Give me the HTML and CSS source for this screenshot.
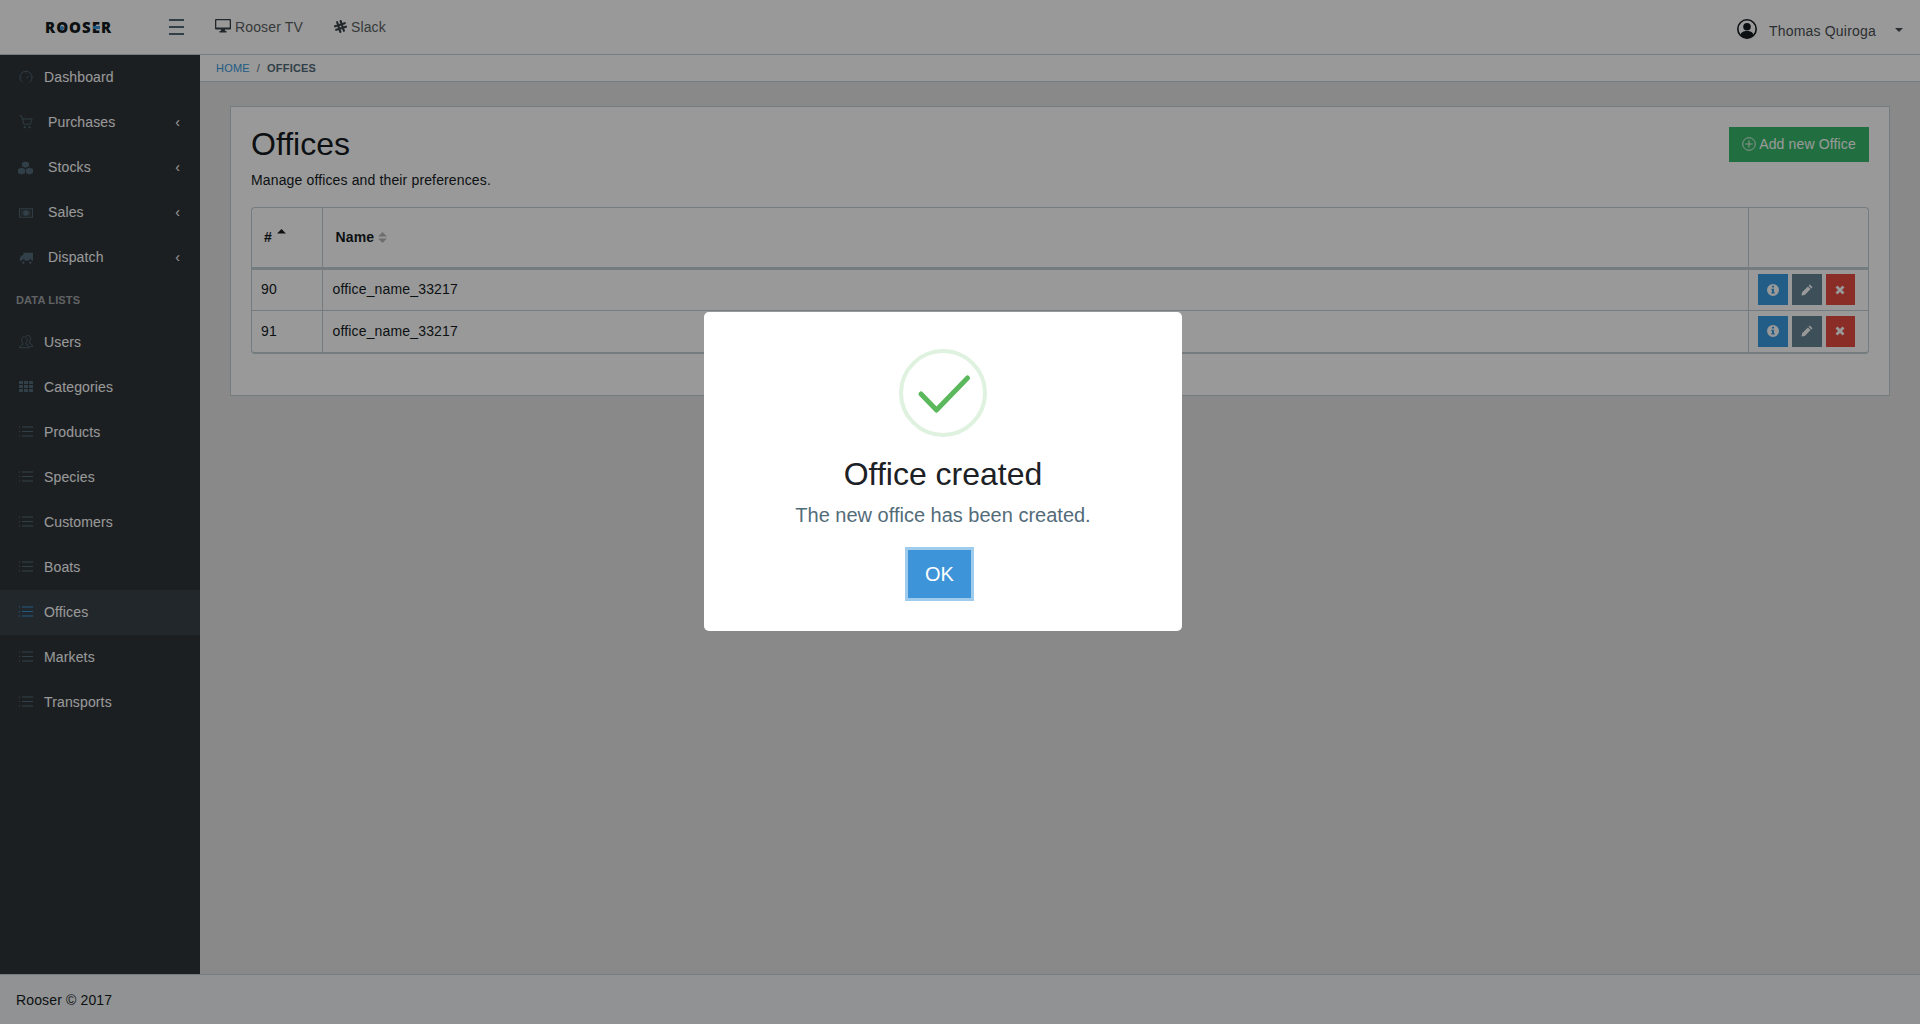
FILE: index.html
```html
<!DOCTYPE html>
<html lang="en">
<head>
    <meta charset="UTF-8">
    <meta name="viewport" content="width=device-width, initial-scale=1.0">
    <title>Rooser - Offices</title>
    <link rel="stylesheet" href="styles.css">
</head>
<body>
    <svg class="sprite" xmlns="http://www.w3.org/2000/svg">
        <symbol id="i-speed" viewBox="0 0 16 16"><path d="M4 14.200A7 7 0 1 1 12 14.200M8 3v1M3 8H2M14 8h-1M8.200 9.200l3-2.400" fill="none" stroke="currentColor" stroke-width="1"/></symbol>
        <symbol id="i-basket" viewBox="0 0 16 16"><path d="M.5 1h2.500l2.500 9.500h7.500M3.800 4.500h11.200l-2 6" fill="none" stroke="currentColor" stroke-width="1"/><circle cx="6.500" cy="14" r="1.200" fill="currentColor"/><circle cx="12" cy="14" r="1.200" fill="currentColor"/></symbol>
        <symbol id="i-cubes" viewBox="0 0 18 16"><path d="M9 .5l4 1.600v4L9 7.700l-4-1.600v-4zM4.500 7.600l4 1.600v4.400l-4 1.900-4-1.900V9.200zM13.500 7.600l4 1.600v4.400l-4 1.900-4-1.900V9.200z" fill="currentColor"/></symbol>
        <symbol id="i-money" viewBox="0 0 15 10"><rect x=".5" y=".5" width="14" height="9" fill="none" stroke="currentColor"/><path d="M2 2h11v6H2z" fill="currentColor" opacity=".35"/><ellipse cx="7.500" cy="5" rx="3" ry="3" fill="currentColor"/></symbol>
        <symbol id="i-truck" viewBox="0 0 16 12"><path d="M5 0h11v9h-1.200a2 2 0 0 0-3.900 0H7a2 2 0 0 0-3.900 0H1V5.500L4 2.500h1zM5 10a1.300 1.300 0 1 0 .01 0zM13 10a1.300 1.300 0 1 0 .01 0z" fill="currentColor"/></symbol>
        <symbol id="i-people" viewBox="0 0 16 16"><path d="M.5 14.500c0-2.500 2.500-3 4-3.800v-1.400C3.400 8.500 3 7 3 5.500 3 3.500 4.300 2 6.200 2s3.200 1.500 3.200 3.500c0 1.500-.5 3-1.500 3.800v1.400c1.500.8 4 1.300 4 3.800zM8 1.200C8.700.7 9.300.5 10 .5c1.900 0 3.200 1.500 3.200 3.500 0 1.500-.5 3-1.500 3.800v1.400c1.500.8 3.800 1.300 3.800 3.800h-2.500" fill="none" stroke="currentColor" stroke-width="1"/></symbol>
        <symbol id="i-grid" viewBox="0 0 14 11"><path d="M0 0h4v3H0zM5 0h4v3H5zM10 0h4v3h-4zM0 4h4v3H0zM5 4h4v3H5zM10 4h4v3h-4zM0 8h4v3H0zM5 8h4v3H5zM10 8h4v3h-4z" fill="currentColor"/></symbol>
        <symbol id="i-list" viewBox="0 0 14 10"><path d="M0 0h1v1H0zM0 4.500h1v1H0zM0 9h1v1H0zM3 0h11v1H3zM3 4.500h11v1H3zM3 9h11v1H3z" fill="currentColor"/></symbol>
        <symbol id="i-desktop" viewBox="0 0 16 14"><path fill-rule="evenodd" d="M1 0h14a1 1 0 0 1 1 1v8.500a1 1 0 0 1-1 1H9.800l.4 1.500h1.300v1.500h-7V12h1.300l.4-1.500H1a1 1 0 0 1-1-1V1a1 1 0 0 1 1-1zM1.300 1.300v7.200h13.400V1.300z" fill="currentColor"/></symbol>
        <symbol id="i-slack" viewBox="0 0 14 14"><g transform="rotate(-18 7 7)" stroke="currentColor" stroke-width="2.300" stroke-linecap="round" fill="none"><path d="M5 1.500v11M9 1.500v11M1.500 5h11M1.500 9h11"/></g></symbol>
        <symbol id="i-user" viewBox="0 0 20 20"><circle cx="10" cy="10" r="9.200" fill="none" stroke="currentColor" stroke-width="1.600"/><circle cx="10" cy="7.800" r="3.800" fill="currentColor"/><path d="M3.500 16.500c.5-3.500 3-4.500 6.500-4.500s6 1 6.500 4.500A9 9 0 0 1 10 19.200a9 9 0 0 1-6.500-2.700z" fill="currentColor"/></symbol>
        <symbol id="i-plus" viewBox="0 0 14 14"><circle cx="7" cy="7" r="6.300" fill="none" stroke="currentColor" stroke-width=".9"/><path d="M7 3.300v7.400M3.300 7h7.400" stroke="currentColor" stroke-width=".9"/></symbol>
        <symbol id="i-info" viewBox="0 0 12 12"><path fill-rule="evenodd" d="M6 0a6 6 0 1 1 0 12A6 6 0 0 1 6 0zM5 1.800v1.700h2V1.800zM4.300 4.800v1.100H5v2.400h-.7v1.100h3.400V8.300H7V4.800z" fill="currentColor"/></symbol>
        <symbol id="i-pencil" viewBox="0 0 12 12"><path d="M8.800.5l2.700 2.700-1.200 1.200-2.700-2.700zM6.900 2.400l2.700 2.700-5.800 5.800L.5 11.500l.6-3.300z" fill="currentColor"/></symbol>
        <symbol id="i-times" viewBox="0 0 10 10"><path d="M1.500 1.500l7 7M8.500 1.500l-7 7" stroke="currentColor" stroke-width="2.800" fill="none"/></symbol>
    </svg>

    <header class="topbar">
        <div class="logo">R<span class="logo-o">O</span>OS<span class="logo-e">E</span>R</div>
        <div class="burger"><span></span><span></span><span></span></div>
        <a class="top-link top-tv"><svg class="ic-tv"><use href="#i-desktop"/></svg>Rooser TV</a>
        <a class="top-link top-slack"><svg class="ic-slack"><use href="#i-slack"/></svg>Slack</a>
        <div class="user">
            <svg class="ic-user"><use href="#i-user"/></svg>
            <span class="user-name">Thomas Quiroga</span>
            <span class="caret"></span>
        </div>
    </header>

    <div class="app-body">
        <nav class="sidebar">
            <a class="nav-item"><svg class="nav-ic"><use href="#i-speed"/></svg><span class="nav-label">Dashboard</span></a>
            <a class="nav-item has-sub"><svg class="nav-ic"><use href="#i-basket"/></svg><span class="nav-label">Purchases</span><span class="nav-arrow">‹</span></a>
            <a class="nav-item has-sub"><svg class="nav-ic wide"><use href="#i-cubes"/></svg><span class="nav-label">Stocks</span><span class="nav-arrow">‹</span></a>
            <a class="nav-item has-sub"><svg class="nav-ic low"><use href="#i-money"/></svg><span class="nav-label">Sales</span><span class="nav-arrow">‹</span></a>
            <a class="nav-item has-sub"><svg class="nav-ic low"><use href="#i-truck"/></svg><span class="nav-label">Dispatch</span><span class="nav-arrow">‹</span></a>
            <div class="nav-title">Data lists</div>
            <a class="nav-item"><svg class="nav-ic"><use href="#i-people"/></svg><span class="nav-label">Users</span></a>
            <a class="nav-item"><svg class="nav-ic list"><use href="#i-grid"/></svg><span class="nav-label">Categories</span></a>
            <a class="nav-item"><svg class="nav-ic list"><use href="#i-list"/></svg><span class="nav-label">Products</span></a>
            <a class="nav-item"><svg class="nav-ic list"><use href="#i-list"/></svg><span class="nav-label">Species</span></a>
            <a class="nav-item"><svg class="nav-ic list"><use href="#i-list"/></svg><span class="nav-label">Customers</span></a>
            <a class="nav-item"><svg class="nav-ic list"><use href="#i-list"/></svg><span class="nav-label">Boats</span></a>
            <a class="nav-item active"><svg class="nav-ic list"><use href="#i-list"/></svg><span class="nav-label">Offices</span></a>
            <a class="nav-item"><svg class="nav-ic list"><use href="#i-list"/></svg><span class="nav-label">Markets</span></a>
            <a class="nav-item"><svg class="nav-ic list"><use href="#i-list"/></svg><span class="nav-label">Transports</span></a>
        </nav>

        <main class="main">
            <div class="breadcrumb"><a>Home</a><span class="sep">/</span><b>Offices</b></div>
            <div class="page">
                <section class="card">
                    <div class="card-head">
                        <div>
                            <h1>Offices</h1>
                            <p>Manage offices and their preferences.</p>
                        </div>
                        <button class="btn-add"><svg class="ic-plus"><use href="#i-plus"/></svg>Add new Office</button>
                    </div>
                    <div class="table-wrap">
                        <table>
                            <thead>
                                <tr>
                                    <th class="col-id"># <svg class="sort" viewBox="0 0 8 10"><path d="M0 4L4 0l4 4z" fill="#151b1e"/></svg></th>
                                    <th class="col-name">Name <svg class="sort" viewBox="0 0 8 10"><path d="M0 4L4 0l4 4zM0 6l4 4 4-4z" fill="#b8b8b8"/></svg></th>
                                    <th class="col-act"></th>
                                </tr>
                            </thead>
                            <tbody>
                                <tr>
                                    <td>90</td>
                                    <td class="cell-name">office_name_33217</td>
                                    <td class="actions">
                                        <span class="act act-info"><svg><use href="#i-info"/></svg></span>
                                        <span class="act act-edit"><svg><use href="#i-pencil"/></svg></span>
                                        <span class="act act-del"><svg><use href="#i-times"/></svg></span>
                                    </td>
                                </tr>
                                <tr>
                                    <td>91</td>
                                    <td class="cell-name">office_name_33217</td>
                                    <td class="actions">
                                        <span class="act act-info"><svg><use href="#i-info"/></svg></span>
                                        <span class="act act-edit"><svg><use href="#i-pencil"/></svg></span>
                                        <span class="act act-del"><svg><use href="#i-times"/></svg></span>
                                    </td>
                                </tr>
                            </tbody>
                        </table>
                    </div>
                </section>
            </div>
        </main>
    </div>

    <footer class="footer">Rooser © 2017</footer>

    <div class="overlay">
        <div class="modal">
            <svg class="modal-check" viewBox="0 0 88 88">
                <circle cx="44" cy="44" r="42" fill="none" stroke="#dff1df" stroke-width="4"/>
                <path d="M22 45l15.500 16L68.500 29" fill="none" stroke="#5cb85c" stroke-width="5" stroke-linecap="round" stroke-linejoin="round"/>
            </svg>
            <h2>Office created</h2>
            <p>The new office has been created.</p>
            <button class="modal-ok">OK</button>
        </div>
    </div>
</body>
</html>
```

FILE: styles.css
```css
* {
    box-sizing: border-box;
}
body {
    margin: 0;
    height: 100vh;
    overflow: hidden;
    display: flex;
    flex-direction: column;
    font-family: "Liberation Sans", Arial, sans-serif;
    font-size: 14px;
    line-height: 21px;
    letter-spacing: 0.14px;
    color: #151b1e;
    background-color: #e4e5e6;
}
.sprite {
    display: none;
}

/* top bar */
.topbar {
    height: 55px;
    flex: none;
    display: flex;
    align-items: center;
    background-color: #fff;
    border-bottom: 1px solid #c2cfd6;
}
.logo {
    width: 169px;
    padding-left: 45px;
    font-family: "Open Sans", sans-serif;
    font-size: 15px;
    font-weight: 800;
    letter-spacing: 1px;
    color: #151b1e;
    flex: none;
}
.logo-o, .logo-e {
    position: relative;
}
.logo-o::after {
    content: "";
    position: absolute;
    left: 4px;
    top: 9px;
    width: 4px;
    height: 4px;
    border-radius: 50%;
    background-color: #3498db;
}
.logo-e::after {
    content: "";
    position: absolute;
    left: 1px;
    top: 9px;
    width: 7px;
    height: 3px;
    background-color: #3498db;
}
.burger {
    width: 15px;
    flex: none;
    display: flex;
    flex-direction: column;
    gap: 5px;
}
.burger span {
    height: 2px;
    background-color: #536c79;
}
.top-link {
    display: flex;
    align-items: center;
    color: #5a5f63;
}
.top-tv {
    margin-left: 31px;
}
.top-slack {
    margin-left: 31px;
}
.ic-tv {
    width: 16px;
    height: 14px;
    margin-right: 4px;
    margin-top: -2px;
    color: #3a4248;
}
.ic-slack {
    width: 13px;
    height: 13px;
    margin-right: 4px;
    margin-top: -2px;
    color: #3a4248;
}
.user {
    margin-left: auto;
    display: flex;
    align-items: center;
    padding-right: 17px;
}
.ic-user {
    width: 20px;
    height: 20px;
    margin-top: 4px;
    color: #151b1e;
}
.user-name {
    margin-left: 12px;
    margin-top: 8px;
    letter-spacing: 0.2px;
    color: #4a4f53;
}
.caret {
    margin-left: 19px;
    margin-top: 6px;
    border-left: 4px solid transparent;
    border-right: 4px solid transparent;
    border-top: 4px solid #4a4f53;
}

/* layout */
.app-body {
    flex: 1;
    display: flex;
    min-height: 0;
}

/* sidebar */
.sidebar {
    width: 200px;
    flex: none;
    background-color: #2f353a;
}
.nav-item {
    height: 45px;
    padding-left: 19px;
    padding-right: 20px;
    display: flex;
    align-items: center;
    color: #fff;
}
.nav-item.active {
    background-color: #3a4248;
}
.nav-item.active .nav-ic {
    color: #3498db;
}
.nav-ic {
    width: 14px;
    height: 14px;
    margin-top: -2px;
    margin-right: 11px;
    color: #536c79;
    flex: none;
}
.nav-ic.wide {
    width: 17px;
    margin-left: -2px;
    margin-top: 0;
    margin-right: 10px;
}
.nav-ic.low {
    margin-top: 0;
}
.nav-ic.list {
    height: 11px;
    margin-top: -3px;
}
.has-sub .nav-label {
    margin-left: 4px;
}
.nav-arrow {
    margin-left: auto;
    font-size: 14px;
    line-height: 14px;
    margin-top: -2px;
}
.nav-title {
    height: 40px;
    padding-left: 16px;
    padding-top: 10px;
    font-size: 11px;
    font-weight: 700;
    text-transform: uppercase;
    color: #a0a4a7;
}

/* main */
.main {
    flex: 1;
    min-width: 0;
    display: flex;
    flex-direction: column;
}
.breadcrumb {
    height: 27px;
    flex: none;
    display: flex;
    align-items: center;
    padding-left: 16px;
    background-color: #fff;
    border-bottom: 1px solid #c2cfd6;
    font-size: 11px;
    letter-spacing: 0.2px;
    text-transform: uppercase;
}
.breadcrumb a {
    color: #3498db;
}
.breadcrumb .sep {
    margin: 0 7px;
    color: #536c79;
}
.breadcrumb b {
    color: #536c79;
}
.page {
    padding: 24px 30px 0 30px;
}
.card {
    height: 290px;
    padding: 20px 20px 0;
    background-color: #fff;
    border: 1px solid #c2cfd6;
}
.card-head {
    display: flex;
    justify-content: space-between;
    align-items: flex-start;
    margin-bottom: 16px;
}
.card-head h1 {
    margin: -2px 0 7px;
    font-size: 32px;
    font-weight: 400;
    line-height: 38px;
    letter-spacing: 0;
}
.card-head p {
    margin: 0;
}
.btn-add {
    width: 140px;
    height: 35px;
    padding: 0 0 1px;
    display: flex;
    align-items: center;
    justify-content: center;
    font-family: inherit;
    font-size: 14px;
    letter-spacing: 0.14px;
    color: #fff;
    background-color: #37ba6b;
    border: none;
}
.ic-plus {
    width: 14px;
    height: 14px;
    margin-right: 3px;
}

/* table */
.table-wrap {
    border: 1px solid #c2cfd6;
    border-radius: 4px;
    border-bottom-width: 2px;
}
table {
    width: 100%;
    border-collapse: collapse;
    table-layout: fixed;
}
th {
    height: 60px;
    padding: 0 0 0 10px;
    text-align: left;
    font-weight: 700;
    border-bottom: 3px solid #c2cfd6;
}
td {
    height: 42px;
    padding: 0 0 0 9px;
    border-bottom: 1px solid #c2cfd6;
}
tbody tr:last-child td {
    border-bottom: none;
    height: 42px;
}
th + th, td + td {
    border-left: 1px solid #c2cfd6;
}
.col-id {
    width: 70px;
    padding-left: 12px;
}
.col-name {
    padding-left: 13px;
}
.col-act {
    width: 120px;
}
.cell-name {
    padding-left: 10px;
    letter-spacing: 0.16px;
}
.sort {
    width: 9px;
    height: 11px;
    margin-left: 0;
    vertical-align: -1px;
}
.col-id .sort {
    margin-left: 1px;
    vertical-align: 2px;
}
.actions {
    font-size: 0;
}
.act {
    display: inline-flex;
    align-items: center;
    justify-content: center;
    width: 30px;
    height: 31px;
    margin-right: 4px;
    color: #fff;
    vertical-align: middle;
}
.act svg {
    width: 12px;
    height: 12px;
}
.act-info {
    background-color: #379be1;
}
.act-edit {
    background-color: #678597;
}
.act-del {
    width: 29px;
    background-color: #e74c42;
}
.act-del svg {
    width: 10px;
    height: 10px;
}

/* footer */
.footer {
    height: 50px;
    flex: none;
    display: flex;
    align-items: center;
    padding-left: 16px;
    padding-top: 2px;
    background-color: #f0f3f5;
    border-top: 1px solid #c2cfd6;
}

/* success dialog */
.overlay {
    position: fixed;
    inset: 0;
    display: flex;
    justify-content: center;
    align-items: flex-start;
    padding-top: 312px;
    padding-right: 34px;
    background-color: rgba(0, 0, 0, 0.4);
}
.modal {
    width: 478px;
    height: 319px;
    padding-top: 37px;
    display: flex;
    flex-direction: column;
    align-items: center;
    background-color: #fff;
    border-radius: 5px;
    letter-spacing: 0;
}
.modal-check {
    width: 88px;
    height: 88px;
    flex: none;
}
.modal h2 {
    margin: 8px 0 0;
    font-size: 32px;
    font-weight: 400;
    line-height: 58px;
    color: #1c2125;
}
.modal p {
    margin: 0;
    font-size: 20px;
    line-height: 24px;
    color: #536c79;
}
.modal-ok {
    width: 69px;
    height: 54px;
    margin-top: 20px;
    margin-right: 7px;
    padding: 0;
    font-family: inherit;
    font-size: 20px;
    color: #fff;
    background-color: #3e94d8;
    border: 3px solid #9fcbec;
}
```
